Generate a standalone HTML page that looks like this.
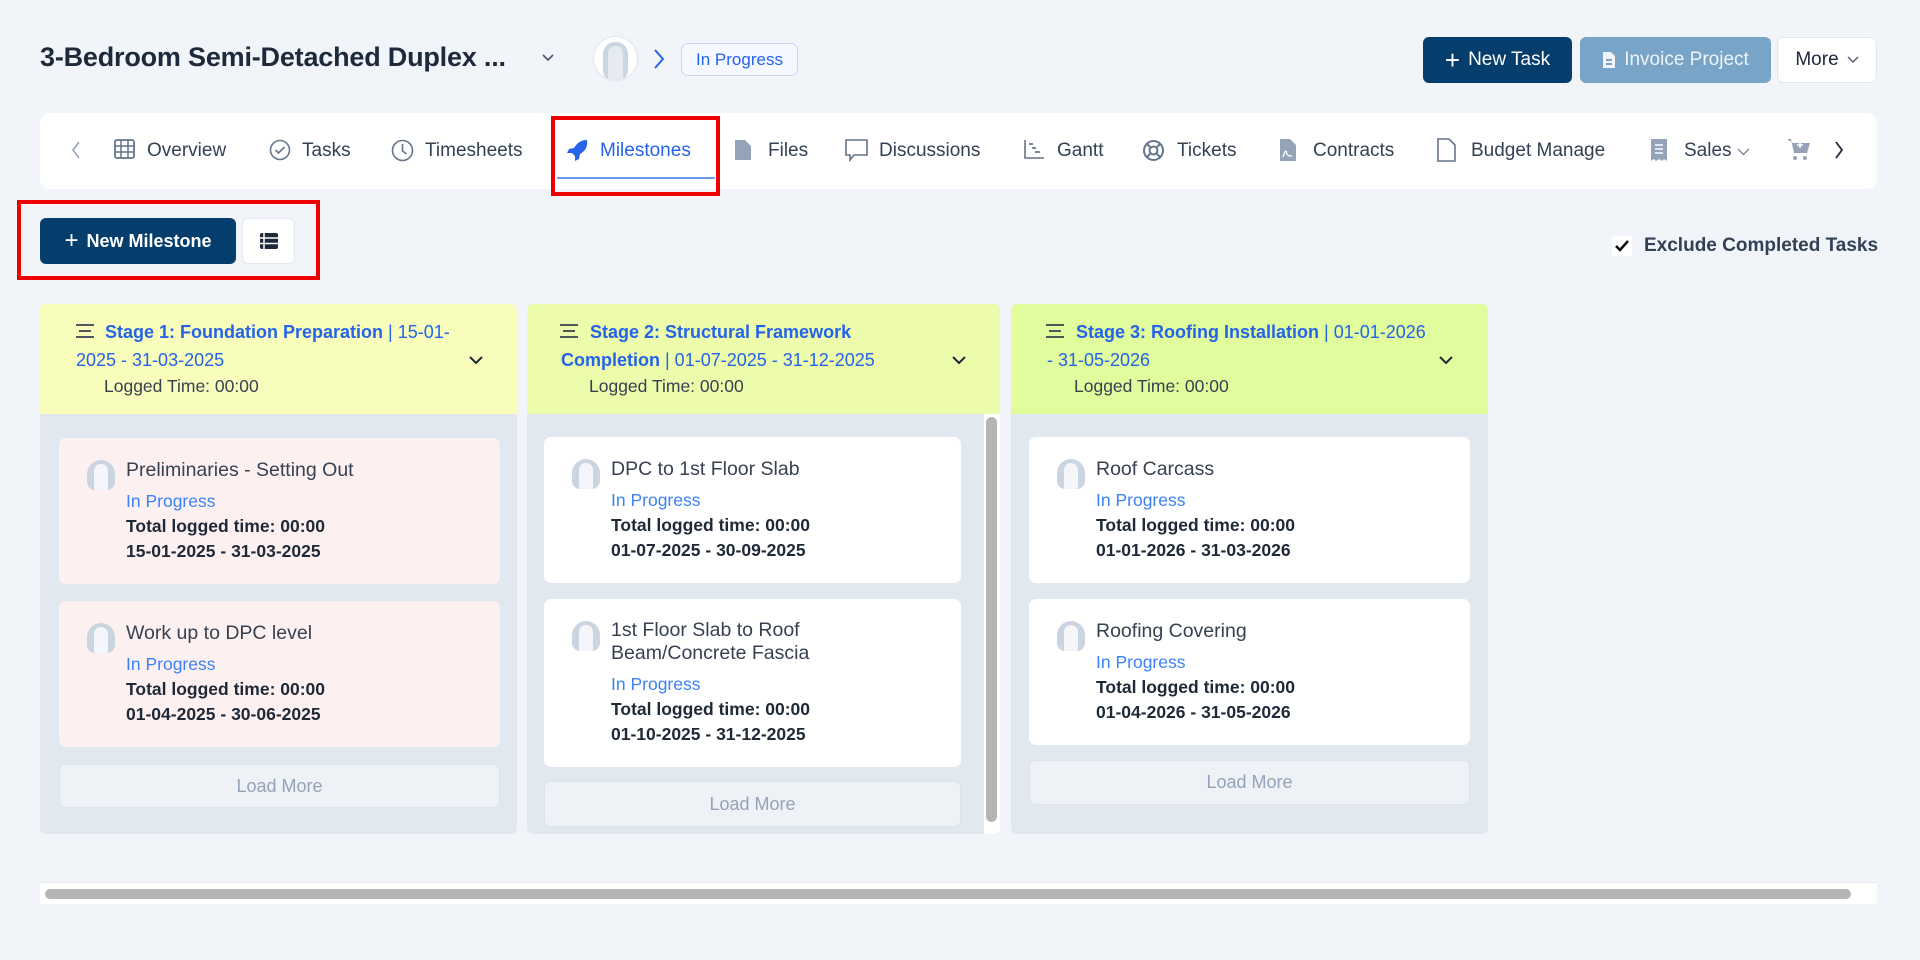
<!DOCTYPE html>
<html><head><meta charset="utf-8"><style>
*{box-sizing:border-box;margin:0;padding:0}
body{width:1920px;height:960px;background:#f1f4f9;font-family:"Liberation Sans",sans-serif;position:relative;overflow:hidden;color:#334155}
.a{position:absolute}
.title{left:40px;top:42px;font-size:27px;font-weight:600;color:#1e293b;letter-spacing:-.2px}
.btn{position:absolute;border-radius:6px;font-size:19px;display:flex;align-items:center;justify-content:center;gap:8px}
.nav{left:40px;top:113px;width:1837px;height:76px;background:#fff;border-radius:10px}
.tab{position:absolute;top:140px;font-size:19px;color:#334155;font-weight:500;white-space:nowrap}
.ic{position:absolute;top:139px}
.col{position:absolute;top:304px;height:530px;background:#e2e8f0;border-radius:6px;overflow:hidden}
.hd{position:absolute;left:0;top:0;right:0;height:110px}
.ht{position:absolute;font-size:18px;color:#2563eb;line-height:28px;white-space:nowrap}
.ht b{font-weight:600}
.lg{position:absolute;font-size:17.5px;color:#374151}
.card{position:absolute;border-radius:7px;background:#fff}
.card.p{background:#fdf0f0}
.ct{position:absolute;left:67px;font-size:19.5px;color:#374151;line-height:23px}
.cs{position:absolute;left:67px;font-size:17.5px;color:#3b82f6}
.cd{position:absolute;left:67px;font-size:17.5px;color:#1f2937;font-weight:600}
.av{position:absolute;left:28px;width:28px;height:30px;border-radius:14px 14px 8px 8px;background:#cbd5e1;overflow:hidden}
.av:after{content:"";position:absolute;left:7px;top:4px;width:14px;height:30px;border-radius:7px;background:#f4f6f9}
.lm{position:absolute;border-radius:6px;background:#eef1f5;border:1px solid #dde3ea;color:#94a3b8;font-size:18px;display:flex;align-items:center;justify-content:center}
.red{position:absolute;border:4px solid #ee0000}
</style></head><body>
<div class="a title">3-Bedroom Semi-Detached Duplex ...</div>
<svg class="a" style="left:541px;top:53px" width="14" height="10"><path d="M2 2l5 5 5-5" stroke="#475569" stroke-width="1.6" fill="none"/></svg>
<div class="a" style="left:594px;top:37px;width:43px;height:43px;border-radius:50%;background:#fff;box-shadow:0 0 2px #ccd;overflow:hidden"><div style="position:absolute;left:9px;top:5px;width:25px;height:40px;border-radius:12px;background:#cbd5e1"></div><div style="position:absolute;left:14px;top:9px;width:15px;height:40px;border-radius:8px;background:#e6ebf2"></div></div>
<svg class="a" style="left:652px;top:48px" width="14" height="22"><path d="M3 2l8 9-8 9" stroke="#2563eb" stroke-width="2" fill="none"/></svg>
<div class="a" style="left:681px;top:43px;width:117px;height:33px;border:1.5px solid #c7d7f5;border-radius:7px;background:#f5f8ff;color:#2563eb;font-size:17px;display:flex;align-items:center;justify-content:center">In Progress</div>

<div class="btn" style="left:1423px;top:37px;width:149px;height:46px;background:#053d6c;color:#fff"><span style="font-size:26px;font-weight:300">+</span>New Task</div>
<div class="btn" style="left:1580px;top:37px;width:191px;height:46px;background:#78a4c8;color:#eef4fa"><svg width="14" height="18"><path d="M1 1h8l4 4v12H1z" fill="#eef4fa"/><rect x="4" y="8" width="6" height="2" fill="#78a4c8"/><rect x="4" y="12" width="6" height="2" fill="#78a4c8"/></svg>Invoice Project</div>
<div class="btn" style="left:1777px;top:37px;width:100px;height:46px;background:#fff;color:#1e293b;border:1px solid #e2e8f0">More <svg width="12" height="8"><path d="M1 1l5 5 5-5" stroke="#475569" stroke-width="1.3" fill="none"/></svg></div>

<div class="a nav"></div>
<svg class="a" style="left:71px;top:141px" width="10" height="18"><path d="M8 1L2 9l6 8" stroke="#94a3b8" stroke-width="1.6" fill="none"/></svg>
<svg class="ic" style="left:114px" width="21" height="20"><rect x="1" y="1" width="19" height="18" rx="2" fill="none" stroke="#64748b" stroke-width="1.8"/><path d="M1 7h19M1 13h19M7 1v18M14 1v18" stroke="#64748b" stroke-width="1.5"/></svg>
<div class="tab" style="left:147px">Overview</div>
<svg class="ic" style="left:269px" width="22" height="22"><circle cx="11" cy="11" r="9.5" fill="none" stroke="#64748b" stroke-width="1.6"/><path d="M6.5 11l3 3 6-6" stroke="#64748b" stroke-width="1.6" fill="none"/></svg>
<div class="tab" style="left:302px">Tasks</div>
<svg class="ic" style="left:391px" width="23" height="23"><circle cx="11.5" cy="11.5" r="10" fill="none" stroke="#64748b" stroke-width="1.6"/><path d="M11.5 5v7l4 3" stroke="#64748b" stroke-width="1.6" fill="none"/></svg>
<div class="tab" style="left:425px">Timesheets</div>
<svg class="ic" style="left:565px;top:138px" width="24" height="24"><path d="M22 2c-6 0-10 3-13 8l-5 1-2 4 5 0 3 3 0 5 4-2 1-5c5-3 8-7 7-14z" fill="#2563eb"/></svg>
<div class="tab" style="left:600px;color:#2563eb">Milestones</div>
<div class="a" style="left:557px;top:177px;width:158px;height:2px;background:#6b9be8"></div>
<svg class="ic" style="left:734px" width="18" height="22"><path d="M1 1h10l6 6v14H1z" fill="#94a3b8"/></svg>
<div class="tab" style="left:768px">Files</div>
<svg class="ic" style="left:845px" width="23" height="23"><path d="M1 1h21v15H9l-4 5v-5H1z" fill="none" stroke="#64748b" stroke-width="1.6"/></svg>
<div class="tab" style="left:879px">Discussions</div>
<svg class="ic" style="left:1023px" width="22" height="21"><path d="M2 1v18h19" stroke="#64748b" stroke-width="1.6" fill="none"/><path d="M6 5h4M9 9h4M12 13h5" stroke="#64748b" stroke-width="1.8"/></svg>
<div class="tab" style="left:1057px">Gantt</div>
<svg class="ic" style="left:1142px" width="23" height="23"><circle cx="11.5" cy="11.5" r="9.5" fill="none" stroke="#64748b" stroke-width="2"/><circle cx="11.5" cy="11.5" r="4" fill="none" stroke="#64748b" stroke-width="2"/><path d="M5 5l3 3M18 5l-3 3M5 18l3-3M18 18l-3-3" stroke="#64748b" stroke-width="2"/></svg>
<div class="tab" style="left:1177px">Tickets</div>
<svg class="ic" style="left:1279px;top:138px" width="18" height="24"><path d="M1 1h10l6 6v16H1z" fill="#94a3b8"/><path d="M4 19c2-6 3-8 4-3 1 2 2 2 5 2" stroke="#fff" stroke-width="1.3" fill="none"/></svg>
<div class="tab" style="left:1313px">Contracts</div>
<svg class="ic" style="left:1437px;top:138px" width="19" height="24"><path d="M1 1h11l6 6v16H1z" fill="none" stroke="#64748b" stroke-width="1.6"/></svg>
<div class="tab" style="left:1471px">Budget Manage</div>
<svg class="ic" style="left:1650px;top:138px" width="18" height="24"><path d="M1 1h16v22l-3-2-2 2-3-2-3 2-2-2-3 2z" fill="#94a3b8"/><path d="M5 7h8M5 11h8M5 15h8" stroke="#fff" stroke-width="1.5"/></svg>
<div class="tab" style="left:1684px">Sales <svg width="13" height="8"><path d="M1 1l5.5 5.5L12 1" stroke="#64748b" stroke-width="1.2" fill="none"/></svg></div>
<svg class="ic" style="left:1786px;top:137px" width="26" height="24"><path d="M1 2h4l3 14h13l3-10H7" fill="#94a3b8"/><circle cx="9" cy="21" r="2" fill="#94a3b8"/><circle cx="19" cy="21" r="2" fill="#94a3b8"/><path d="M14 5v6M11 8h6" stroke="#fff" stroke-width="1.6"/></svg>
<svg class="a" style="left:1834px;top:141px" width="10" height="18"><path d="M2 1l6 8-6 8" stroke="#1e293b" stroke-width="1.8" fill="none"/></svg>
<div class="red" style="left:551px;top:116px;width:169px;height:80px"></div>

<div class="btn" style="left:40px;top:218px;width:196px;height:46px;background:#053d6c;color:#fff;font-size:18px;font-weight:600"><span style="font-size:24px;font-weight:300">+</span>New Milestone</div>
<div class="btn" style="left:242px;top:218px;width:53px;height:46px;background:#fff;border:1px solid #e2e8f0"><svg width="18" height="16"><rect x="0" y="0" width="18" height="16" rx="2" fill="#1e293b"/><path d="M4 0v16M0 5h18M0 10.5h18" stroke="#fff" stroke-width="1.5"/></svg></div>
<div class="red" style="left:17px;top:200px;width:303px;height:80px"></div>

<div class="a" style="left:1612px;top:236px;width:20px;height:20px;background:#fff;border-radius:3px"><svg width="20" height="20"><path d="M4 10l4 4 8-9" stroke="#111" stroke-width="2.6" fill="none"/></svg></div>
<div class="a" style="left:1644px;top:235px;font-size:19px;font-weight:600;color:#334155">Exclude Completed Tasks</div>

<!-- col1 -->
<div class="col" style="left:40px;width:477px">
 <div class="hd" style="background:#f8fdbb"></div>
 <svg class="a" style="left:36px;top:20px" width="18" height="14"><path d="M0 1h18M3 7h12M0 13h18" stroke="#374151" stroke-width="1.8"/></svg>
 <div class="ht" style="left:65px;top:14px"><b>Stage 1: Foundation Preparation</b> | 15-01-</div>
 <div class="ht" style="left:36px;top:42px">2025 - 31-03-2025</div>
 <div class="lg" style="left:64px;top:72px">Logged Time: 00:00</div>
 <svg class="a" style="left:428px;top:51px" width="16" height="10"><path d="M2 2l6 6 6-6" stroke="#1f2937" stroke-width="2" fill="none"/></svg>
 <div class="card p" style="left:19px;top:134px;width:441px;height:146px"><div class="av" style="top:22px"></div><div class="ct" style="top:21px">Preliminaries - Setting Out</div><div class="cs" style="top:53px">In Progress</div><div class="cd" style="top:78px">Total logged time: 00:00</div><div class="cd" style="top:103px">15-01-2025 - 31-03-2025</div></div>
 <div class="card p" style="left:19px;top:297px;width:441px;height:146px"><div class="av" style="top:22px"></div><div class="ct" style="top:21px">Work up to DPC level</div><div class="cs" style="top:53px">In Progress</div><div class="cd" style="top:78px">Total logged time: 00:00</div><div class="cd" style="top:103px">01-04-2025 - 30-06-2025</div></div>
 <div class="lm" style="left:19px;top:460px;width:441px;height:44px">Load More</div>
</div>
<!-- col2 -->
<div class="col" style="left:527px;width:473px">
 <div class="hd" style="background:#ecfcab"></div>
 <svg class="a" style="left:33px;top:20px" width="18" height="14"><path d="M0 1h18M3 7h12M0 13h18" stroke="#374151" stroke-width="1.8"/></svg>
 <div class="ht" style="left:63px;top:14px"><b>Stage 2: Structural Framework</b></div>
 <div class="ht" style="left:34px;top:42px"><b>Completion</b> | 01-07-2025 - 31-12-2025</div>
 <div class="lg" style="left:62px;top:72px">Logged Time: 00:00</div>
 <svg class="a" style="left:424px;top:51px" width="16" height="10"><path d="M2 2l6 6 6-6" stroke="#1f2937" stroke-width="2" fill="none"/></svg>
 <div class="a" style="left:457px;top:110px;width:16px;height:420px;background:#fff"></div>
 <div class="a" style="left:459px;top:113px;width:11px;height:405px;background:#b5b5b5;border-radius:6px"></div>
 <div class="card" style="left:17px;top:133px;width:417px;height:146px"><div class="av" style="top:22px"></div><div class="ct" style="top:21px">DPC to 1st Floor Slab</div><div class="cs" style="top:53px">In Progress</div><div class="cd" style="top:78px">Total logged time: 00:00</div><div class="cd" style="top:103px">01-07-2025 - 30-09-2025</div></div>
 <div class="card" style="left:17px;top:295px;width:417px;height:168px"><div class="av" style="top:22px"></div><div class="ct" style="top:20px">1st Floor Slab to Roof<br>Beam/Concrete Fascia</div><div class="cs" style="top:75px">In Progress</div><div class="cd" style="top:100px">Total logged time: 00:00</div><div class="cd" style="top:125px">01-10-2025 - 31-12-2025</div></div>
 <div class="lm" style="left:17px;top:477px;width:417px;height:46px">Load More</div>
</div>
<!-- col3 -->
<div class="col" style="left:1011px;width:477px">
 <div class="hd" style="background:#e0fc9c"></div>
 <svg class="a" style="left:35px;top:20px" width="18" height="14"><path d="M0 1h18M3 7h12M0 13h18" stroke="#374151" stroke-width="1.8"/></svg>
 <div class="ht" style="left:65px;top:14px"><b>Stage 3: Roofing Installation</b> | 01-01-2026</div>
 <div class="ht" style="left:36px;top:42px">- 31-05-2026</div>
 <div class="lg" style="left:63px;top:72px">Logged Time: 00:00</div>
 <svg class="a" style="left:427px;top:51px" width="16" height="10"><path d="M2 2l6 6 6-6" stroke="#1f2937" stroke-width="2" fill="none"/></svg>
 <div class="card" style="left:18px;top:133px;width:441px;height:146px"><div class="av" style="top:22px"></div><div class="ct" style="top:21px">Roof Carcass</div><div class="cs" style="top:53px">In Progress</div><div class="cd" style="top:78px">Total logged time: 00:00</div><div class="cd" style="top:103px">01-01-2026 - 31-03-2026</div></div>
 <div class="card" style="left:18px;top:295px;width:441px;height:146px"><div class="av" style="top:22px"></div><div class="ct" style="top:21px">Roofing Covering</div><div class="cs" style="top:53px">In Progress</div><div class="cd" style="top:78px">Total logged time: 00:00</div><div class="cd" style="top:103px">01-04-2026 - 31-05-2026</div></div>
 <div class="lm" style="left:18px;top:456px;width:441px;height:45px">Load More</div>
</div>

<div class="a" style="left:40px;top:882px;width:1837px;height:22px;background:#fff;border-top:1px solid #e5e7eb"></div>
<div class="a" style="left:45px;top:889px;width:1806px;height:10px;background:#b5b5b5;border-radius:5px"></div>
</body></html>
